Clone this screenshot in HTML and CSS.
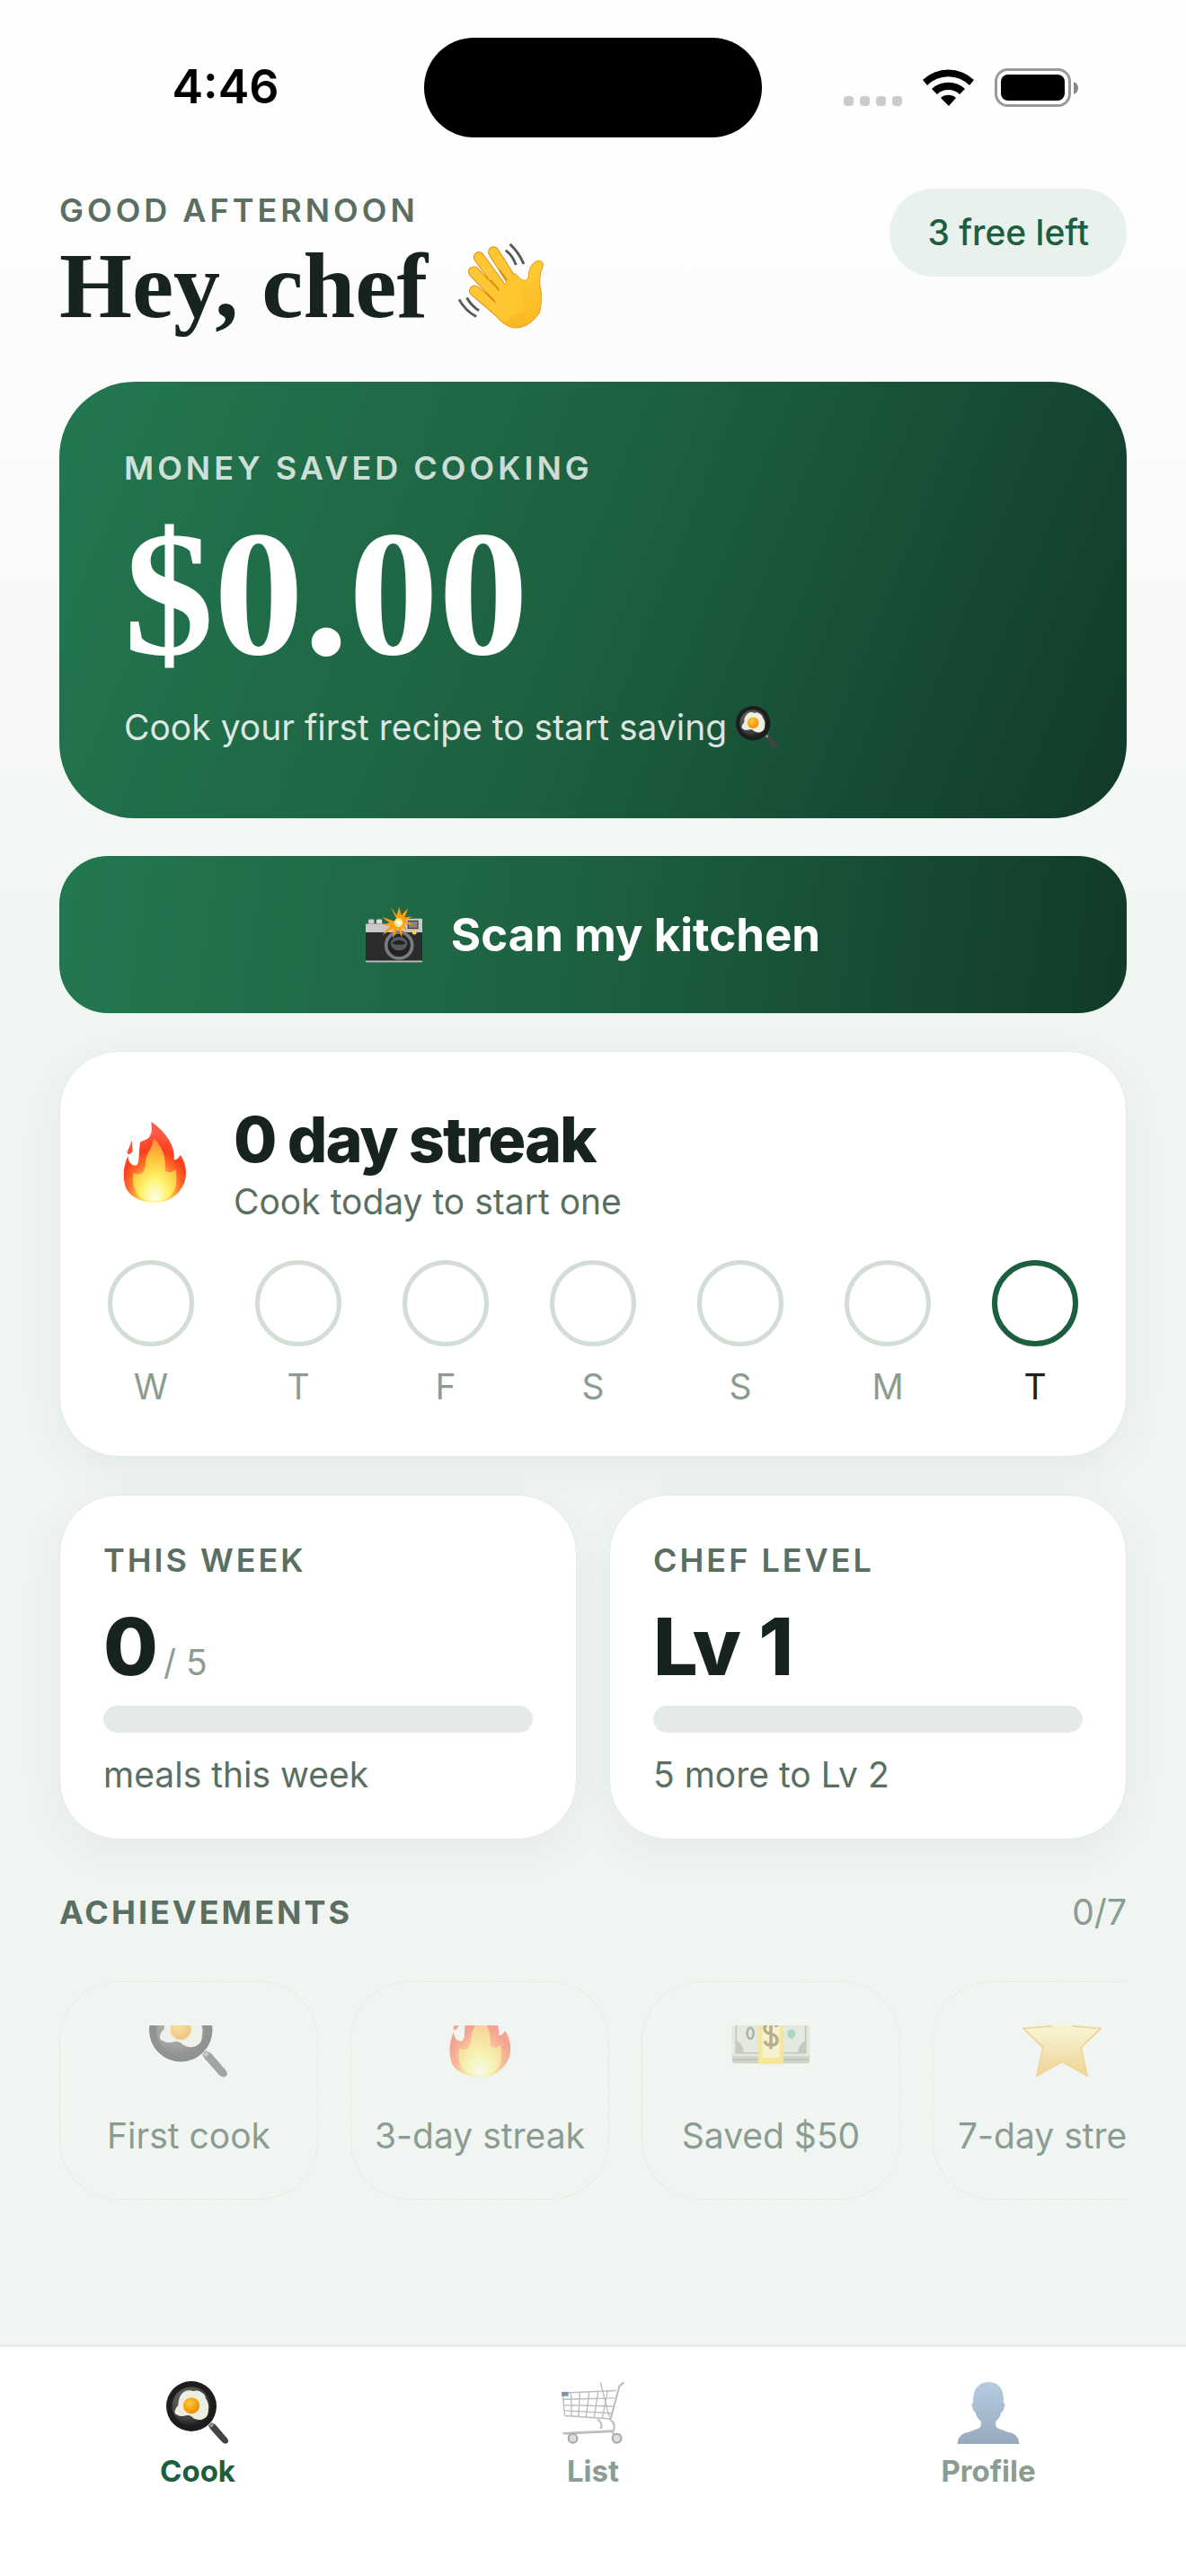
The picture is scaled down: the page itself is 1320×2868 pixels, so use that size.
FILE: index.html
```html
<!DOCTYPE html>
<html lang="en">
<head>
  <meta charset="UTF-8">
  <meta name="viewport" content="width=device-width, initial-scale=1.0">
  <title>Cook</title>
  <link rel="stylesheet" href="styles.css">
</head>
<body>
  <!-- shared icons -->
  <svg class="sprite" width="0" height="0" aria-hidden="true">
    <defs>
      <radialGradient id="pan-fill" cx="40%" cy="35%" r="65%">
        <stop offset="0" stop-color="#777"/>
        <stop offset="0.7" stop-color="#444"/>
        <stop offset="1" stop-color="#222"/>
      </radialGradient>
      <radialGradient id="yolk" cx="40%" cy="35%" r="65%">
        <stop offset="0" stop-color="#ffc93c"/>
        <stop offset="1" stop-color="#f08c00"/>
      </radialGradient>
      <radialGradient id="fire" cx="50%" cy="90%" r="75%">
        <stop offset="0" stop-color="#fffde0"/>
        <stop offset="0.2" stop-color="#fff07a"/>
        <stop offset="0.36" stop-color="#ffc341"/>
        <stop offset="0.52" stop-color="#ff7a2f"/>
        <stop offset="0.75" stop-color="#fb3d1c"/>
        <stop offset="1" stop-color="#ff5a45"/>
      </radialGradient>
      <radialGradient id="fire-core" cx="50%" cy="95%" r="90%">
        <stop offset="0" stop-color="#ffffec"/>
        <stop offset="0.35" stop-color="#fff36b"/>
        <stop offset="0.7" stop-color="#ffc23a"/>
        <stop offset="1" stop-color="#ff8f3a"/>
      </radialGradient>
      <linearGradient id="star-fill" x1="0" y1="0" x2="0" y2="1">
        <stop offset="0" stop-color="#ffd84a"/>
        <stop offset="0.4" stop-color="#fff3a8"/>
        <stop offset="1" stop-color="#f0a92a"/>
      </linearGradient>
      <linearGradient id="skin" x1="0" y1="0" x2="0" y2="1">
        <stop offset="0" stop-color="#ffcb35"/>
        <stop offset="1" stop-color="#fab820"/>
      </linearGradient>
      <linearGradient id="person" x1="0" y1="0" x2="0" y2="1">
        <stop offset="0" stop-color="#b5cce0"/>
        <stop offset="1" stop-color="#98a9bd"/>
      </linearGradient>
    </defs>
    <symbol id="icon-pan" viewBox="0 0 100 100">
      <path d="M67 71l5-5 6 3 19 22q4 6-1 8-4 2-9-4L71 77z" fill="#444"/>
      <path d="M68 71l5-4 3 3-4 4z" fill="#999"/>
      <circle cx="40" cy="40" r="40" fill="#1d1d1d"/>
      <circle cx="40" cy="40" r="31" fill="url(#pan-fill)"/>
      <path d="M28 17q7-4 15-1 7-3 13 2 6 3 7 10 6 8 4 18 0 10-6 13-6 4-12 2-6-1-9-5-5-3-10-1-8 2-12-1-6-2-4-8 2-5 5-7 0-15 9-22z" fill="#eceee0"/>
      <circle cx="40" cy="39" r="13" fill="url(#yolk)"/>
    </symbol>
    <symbol id="icon-fire" viewBox="0 0 100 100">
      <path d="M46 0C60 10 76 26 74 47c4 0 6-3 8-6 8 11 8 25 5 34-7 17-21 25-37 25S18 92 14 80c-4-14-2-26 3-38 1 10 5 12 10 12 5-2 3-14 5-28 2-4 8-2 12-8 4-6 2-12 2-18zM22 23l-6 15c2 4 5 1 7-2z" fill="url(#fire)"/>
      <path d="M49 20c10 10 16 24 14 40 4 4 10 2 13-1 3 16 0 26-6 32-10 9-30 9-40 0-6-8-8-18-6-28 10 5 15-2 15-13 0-11 9-17 10-30z" fill="url(#fire-core)"/>
    </symbol>
  </svg>

  <div class="status-bar">
    <span class="time">4:46</span>
    <div class="island"></div>
    <div class="status-icons">
      <svg width="65" height="43" viewBox="0 0 65 43" fill="#cbcbcb" aria-hidden="true">
        <rect x="0" y="31" width="11" height="11" rx="4"/>
        <rect x="18" y="31" width="11" height="11" rx="4"/>
        <rect x="36" y="31" width="11" height="11" rx="4"/>
        <rect x="54" y="31" width="11" height="11" rx="4"/>
      </svg>
      <svg width="57" height="43" viewBox="0 0 57 43" aria-hidden="true">
        <path d="M0 13a41 41 0 0 1 57 0l-5 6a33 33 0 0 0-47 0z"/>
        <path d="M10 23a27 27 0 0 1 37 0l-6 6a18 18 0 0 0-25 0z"/>
        <path d="M20 33a13 13 0 0 1 17 0l-8 9z"/>
      </svg>
      <svg width="93" height="43" viewBox="0 0 93 43" aria-hidden="true">
        <rect x="1.5" y="1.5" width="82" height="40" rx="13" fill="none" stroke="#999" stroke-width="3"/>
        <rect x="7" y="7" width="71" height="29" rx="8"/>
        <path d="M88 15q5 2 5 7t-5 7z" fill="#888"/>
      </svg>
    </div>
  </div>

  <main class="screen">
    <header class="header">
      <div>
        <p class="label wide">GOOD AFTERNOON</p>
        <h1 class="title">Hey, chef
          <svg class="wave" viewBox="0 0 100 100" role="img" aria-label="waving hand">
            <g fill="none" stroke="#d98d16" stroke-width="13" stroke-linecap="round">
              <path d="M41 11l24 38M24 17l32 44M18 34l34 36M19 56l35 30"/>
            </g>
            <path d="M66 36l6 6q5 4 9 0 1-18 11-21 8 0 6 7-6 14-2 28 1 16-2 26-12 17-28 17-10-1-18-9l-6-8 2-14 6-13 8-12z" fill="url(#skin)" stroke="#e09a1c" stroke-width="1"/>
            <g fill="none" stroke="#ffc733" stroke-width="11" stroke-linecap="round">
              <path d="M41 11l24 38M24 17l32 44M18 34l34 36M19 56l35 30"/>
            </g>
            <path d="M58 43l14 4 6 30-22 12-12-21z" fill="#ffc531"/>
            <path d="M56 43l-8-11M47 55l-9-11M42 68l-9-9" stroke="#d98d16" stroke-width="2" stroke-linecap="round"/>
            <path d="M60 2q10 9 16 23M55 9q8 6 12 17M1 66q7 13 20 20M10 64q5 9 14 15" fill="none" stroke="#595959" stroke-width="3"/>
          </svg>
        </h1>
      </div>
      <span class="pill">3 free left</span>
    </header>

    <section class="hero">
      <p class="label wide">MONEY SAVED COOKING</p>
      <p class="amount">$0.00</p>
      <p class="hero-sub">Cook your first recipe to start saving
        <svg class="icon-small" role="img" aria-label="frying pan"><use href="#icon-pan"/></svg>
      </p>
    </section>

    <button class="scan" type="button">
      <svg class="camera" viewBox="0 0 100 100" aria-hidden="true">
        <rect x="5" y="23" width="10" height="10" rx="2" fill="#ccc"/>
        <rect x="19" y="23" width="10" height="10" rx="2" fill="#ddd"/>
        <rect x="0" y="31" width="100" height="66" rx="2" fill="#2c2c2c"/>
        <path d="M0 31h36l36-9h28v24H0z" fill="#c9c9c9"/>
        <rect x="75" y="26" width="17" height="13" fill="#8b8176" stroke="#444" stroke-width="2"/>
        <rect x="0" y="96" width="100" height="3" fill="#bbb"/>
        <circle cx="59" cy="69" r="26" fill="#777c80"/>
        <circle cx="59" cy="69" r="20" fill="#222"/>
        <ellipse cx="59" cy="66" rx="15" ry="12" fill="#555a5f"/>
        <path d="M46 65q13-10 25 0-12 6-25 0z" fill="#222"/>
        <circle cx="86" cy="46" r="4" fill="#ffd23c"/>
        <path d="M58 29l-14-28 11 15 4-15 4 15 12-13-6 17 13-2-12 7 14 8-16-2 5 14-10-9 1 20-7-17-9 18 1-18-20 12 14-16-14-2 14-3-14-11z" fill="#ff9d0a"/>
        <circle cx="58" cy="29" r="8" fill="#ffe680"/>
        <circle cx="58" cy="29" r="4" fill="#fff"/>
      </svg>
      Scan my kitchen
    </button>

    <section class="card streak">
      <div class="streak-top">
        <svg class="flame" role="img" aria-label="fire"><use href="#icon-fire"/></svg>
        <div>
          <h2 class="streak-title">0 day streak</h2>
          <p class="muted">Cook today to start one</p>
        </div>
      </div>
      <ul class="days">
        <li class="day"><span class="ring"></span>W</li>
        <li class="day"><span class="ring"></span>T</li>
        <li class="day"><span class="ring"></span>F</li>
        <li class="day"><span class="ring"></span>S</li>
        <li class="day"><span class="ring"></span>S</li>
        <li class="day"><span class="ring"></span>M</li>
        <li class="day today"><span class="ring"></span>T</li>
      </ul>
    </section>

    <div class="stats">
      <section class="card stat">
        <h2 class="label">THIS WEEK</h2>
        <p class="stat-value">0<span class="goal">/ 5</span></p>
        <div class="bar"></div>
        <p class="muted">meals this week</p>
      </section>
      <section class="card stat">
        <h2 class="label">CHEF LEVEL</h2>
        <p class="stat-value">Lv 1</p>
        <div class="bar"></div>
        <p class="muted">5 more to Lv 2</p>
      </section>
    </div>

    <div class="section-head">
      <h2 class="label">ACHIEVEMENTS</h2>
      <span class="count">0/7</span>
    </div>

    <ul class="badges">
      <li class="badge">
        <div class="badge-icon"><svg aria-hidden="true"><use href="#icon-pan"/></svg></div>
        First cook
      </li>
      <li class="badge">
        <div class="badge-icon"><svg aria-hidden="true"><use href="#icon-fire"/></svg></div>
        3-day streak
      </li>
      <li class="badge">
        <div class="badge-icon">
          <svg viewBox="0 0 100 100" aria-hidden="true">
            <rect x="1" y="24" width="98" height="58" rx="3" fill="#a4ad9b"/>
            <rect x="1" y="24" width="98" height="49" rx="2" fill="#d5dcc8"/>
            <rect x="6" y="28" width="88" height="41" fill="none" stroke="#8b9a80" stroke-width="2"/>
            <path d="M6 69v-16q9 4 10 16zM94 69v-16q-9 4-10 16z" fill="#8b9a80"/>
            <ellipse cx="24" cy="44" rx="4" ry="7" fill="none" stroke="#5d6b55" stroke-width="3"/>
            <ellipse cx="76" cy="45" rx="5" ry="6" fill="#58b484"/>
            <path d="M2 77h96" stroke="#7d8873" stroke-width="2"/>
            <path d="M34 24h32v59H34z" fill="#ffd62e"/>
            <path d="M39 24h22v51H39z" fill="#fff0a6"/>
            <path d="M58 36q-3-5-8-5-8 0-8 7 0 5 8 7t8 8q0 6-8 6-6 0-8-5M50 26v38" fill="none" stroke="#6b5a10" stroke-width="4"/>
          </svg>
        </div>
        Saved $50
      </li>
      <li class="badge">
        <div class="badge-icon">
          <svg viewBox="0 0 100 100" aria-hidden="true">
            <path d="M50 2l14 33 35 3-25 24 8 36-32-18-32 18 8-36L1 38l35-3z" fill="url(#star-fill)" stroke="#f2ae2c" stroke-width="2" stroke-linejoin="round"/>
          </svg>
        </div>
        7-day streak
      </li>
    </ul>
  </main>

  <nav class="tabs">
    <a class="tab active" href="#cook">
      <svg class="tab-icon" aria-hidden="true"><use href="#icon-pan"/></svg>
      Cook
    </a>
    <a class="tab" href="#list">
      <svg class="tab-icon" viewBox="0 0 100 100" fill="none" stroke="#bdbdbd" stroke-width="2" aria-hidden="true">
        <path d="M99 2l-7 6-14 52" stroke-width="3"/>
        <path d="M1 19l86-4M2 29l82-2M3 38l79 2M4 47l76 4M5 55l73 5M2 19l3 36M15 19l1 37M29 18l-2 39M44 17l-5 41M58 17l-6 41M73 16l-8 42M62 2q4 18 14 55"/>
        <path d="M57 60q10 8 5 16M76 60q12 8 6 20L5 84" stroke-width="3"/>
        <path d="M2 83l80-4v6" stroke-width="3"/>
        <path d="M1 18h9v5H1z" fill="#7d97aa" stroke="#7d97aa"/>
        <circle cx="18" cy="91" r="7" fill="#ddd" stroke="#aaa" stroke-width="3"/>
        <circle cx="88" cy="91" r="7" fill="#ddd" stroke="#aaa" stroke-width="3"/>
      </svg>
      List
    </a>
    <a class="tab" href="#profile">
      <svg class="tab-icon" viewBox="0 0 100 100" aria-hidden="true">
        <path d="M51 1q25 2 23 33 4 3 1 8-1 6-4 7-2 9-9 15-2 8 3 11 12 5 23 8 11 5 11 17H1q0-12 11-17 11-3 23-8 5-3 3-11-7-6-9-15-3-1-4-7-3-5 1-8Q24 3 51 1z" fill="url(#person)"/>
      </svg>
      Profile
    </a>
  </nav>
</body>
</html>
```

FILE: styles.css
```css
:root {
  --ink: #16241d;
  --muted: #5a6f62;
  --faint: #8b9c91;
  --green: #1b5e40;
  --line: #e4ebe6;
  --ring: #d3ddd6;
}
* { box-sizing: border-box; }
body {
  margin: 0;
  min-height: 100vh;
  display: flex;
  flex-direction: column;
  font-family: Inter, "Liberation Sans", sans-serif;
  font-size: 39px;
  line-height: 50px;
  color: var(--ink);
  background: #f0f5f1 linear-gradient(#ffffff, #fdfdfd 300px, #f0f5f1 1200px) no-repeat;
}
h1, h2, p, ul { margin: 0; padding: 0; }
ul { list-style: none; }
svg { flex-shrink: 0; }
.sprite { position: absolute; }

/* status bar */
.status-bar {
  display: grid;
  grid-template-columns: 1fr 376px 1fr;
  align-items: center;
  height: 194px;
}
.time {
  padding-left: 30px;
  text-align: center;
  font-size: 52px;
  font-weight: 600;
  color: #000;
}
.island {
  height: 111px;
  border-radius: 56px;
  background: #000;
}
.status-icons {
  display: flex;
  justify-content: center;
  gap: 23px;
  padding-right: 30px;
}

.screen {
  flex: 1;
  padding: 16px 66px 0;
}
.label {
  font-size: 36px;
  font-weight: 600;
  line-height: 48px;
  letter-spacing: 3px;
  color: var(--muted);
}
.label.wide { letter-spacing: 4px; }
.muted { color: var(--muted); }

.header {
  display: flex;
  justify-content: space-between;
  align-items: flex-start;
  margin-bottom: 47px;
}
.title {
  display: flex;
  align-items: center;
  gap: 34px;
  font-family: "Liberation Serif", serif;
  font-size: 104px;
  font-weight: 700;
  line-height: 120px;
}
.wave { width: 96px; height: 96px; }
.pill {
  padding: 24px 42px;
  border-radius: 50px;
  background: #e8f1ec;
  color: var(--green);
  font-weight: 500;
}

.hero {
  padding: 72px;
  border-radius: 84px;
  background: linear-gradient(112deg, #237850, #1d6040 50%, #113a29);
  color: #fff;
}
.hero .label { color: rgba(255, 255, 255, 0.8); }
.amount {
  margin: 16px 0 20px;
  font-family: "Liberation Serif", serif;
  font-size: 200px;
  font-weight: 700;
  line-height: 200px;
}
.hero-sub {
  display: flex;
  align-items: center;
  gap: 10px;
  line-height: 58px;
  color: rgba(255, 255, 255, 0.85);
}
.icon-small { width: 48px; height: 48px; }

.scan {
  display: flex;
  justify-content: center;
  align-items: center;
  gap: 32px;
  width: 100%;
  margin: 42px 0;
  padding: 56px;
  border: 0;
  border-radius: 54px;
  background: linear-gradient(98deg, #237850, #1d6040 50%, #113a29);
  color: #fff;
  font: 700 51px/62px Inter, "Liberation Sans", sans-serif;
  cursor: pointer;
}
.camera { width: 63px; height: 63px; }

.card {
  border: 1px solid var(--line);
  border-radius: 66px;
  background: #fff;
  box-shadow: 0 12px 48px rgba(20, 60, 40, 0.06);
}
.streak { padding: 54px 53px 52px; }
.streak-top {
  display: flex;
  align-items: center;
  gap: 36px;
}
.flame { width: 104px; height: 90px; }
.streak-title {
  font-size: 70px;
  font-weight: 800;
  line-height: 88px;
  letter-spacing: -2px;
}
.days {
  display: flex;
  justify-content: space-between;
  margin-top: 40px;
}
.day {
  display: flex;
  flex-direction: column;
  align-items: center;
  gap: 20px;
  color: var(--faint);
}
.ring {
  width: 96px;
  height: 96px;
  border: 5px solid var(--ring);
  border-radius: 50%;
}
.today { color: var(--ink); }
.today .ring { border: 6px solid var(--green); }

.stats {
  display: grid;
  grid-template-columns: 1fr 1fr;
  gap: 36px;
  margin-top: 42px;
}
.stat { padding: 48px 48px 46px; }
.stat-value {
  margin: 22px 0 16px;
  font-size: 88px;
  font-weight: 800;
  line-height: 100px;
}
.goal {
  margin-left: 6px;
  font-size: 39px;
  font-weight: 400;
  line-height: 1;
  color: var(--faint);
}
.bar {
  height: 30px;
  margin-bottom: 22px;
  border-radius: 15px;
  background: var(--line);
}

.section-head {
  display: flex;
  justify-content: space-between;
  align-items: center;
  margin: 56px 0 52px;
}
.section-head .label { font-weight: 700; }
.count { color: var(--faint); }

.badges {
  display: flex;
  gap: 36px;
  overflow-x: auto;
  scrollbar-width: none;
}
.badge {
  flex: 0 0 288px;
  display: flex;
  flex-direction: column;
  align-items: center;
  padding: 48px 0 45px;
  border: 1px dashed #dfe7e1;
  border-radius: 66px;
  color: var(--faint);
  white-space: nowrap;
}
/* only the lower part of a locked badge's icon shows */
.badge-icon {
  display: flex;
  align-items: flex-end;
  height: 58px;
  margin-bottom: 40px;
  overflow: hidden;
  opacity: 0.45;
}
.badge-icon svg { width: 88px; height: 88px; }

/* bottom tabs */
.tabs {
  display: grid;
  grid-template-columns: repeat(3, 1fr);
  height: 258px;
  padding-top: 38px;
  border-top: 3px solid #e9eeea;
  background: #fff;
}
.tab {
  display: flex;
  flex-direction: column;
  align-items: center;
  gap: 8px;
  color: var(--faint);
  font-size: 33px;
  font-weight: 700;
  line-height: 44px;
  text-decoration: none;
}
.tab.active { color: var(--green); }
.tab-icon { width: 70px; height: 70px; }
```
